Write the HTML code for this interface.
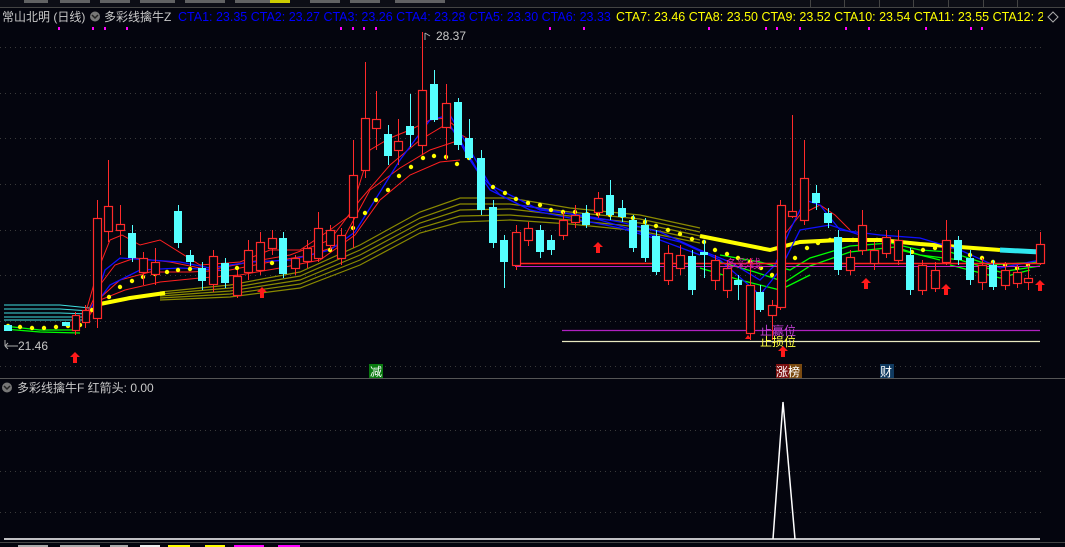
<!DOCTYPE html>
<html><head><meta charset="utf-8"><style>
body{margin:0;background:#04050e;width:1065px;height:547px;overflow:hidden;font-family:"Liberation Sans","Noto Sans CJK SC",sans-serif}
svg{position:absolute;left:0;top:0}
.t{font-family:"Liberation Sans","Noto Sans CJK SC",sans-serif;font-size:12px}
.h{font-family:"Liberation Sans","Noto Sans CJK SC",sans-serif;font-size:12.5px}
</style></head><body>
<svg width="1065" height="547" viewBox="0 0 1065 547">
<rect width="1065" height="547" fill="#04050e"/>
<rect x="0" y="0" width="1065" height="7" fill="#0d0e16"/>
<g fill="#777" opacity=".8"><rect x="24" y="0" width="24" height="3"/><rect x="60" y="0" width="30" height="3"/><rect x="100" y="0" width="30" height="3"/><rect x="140" y="0" width="35" height="3"/><rect x="185" y="0" width="40" height="3"/><rect x="235" y="0" width="40" height="3"/><rect x="310" y="0" width="30" height="3"/><rect x="350" y="0" width="30" height="3"/><rect x="395" y="0" width="50" height="3"/></g>
<rect x="270" y="0" width="20" height="3" fill="#cc0"/>
<g stroke="#444" stroke-width="1"><line x1="0" y1="7.5" x2="1065" y2="7.5"/><line x1="810.5" y1="0" x2="810.5" y2="7"/><line x1="844.5" y1="0" x2="844.5" y2="7"/><line x1="879.5" y1="0" x2="879.5" y2="7"/><line x1="913.5" y1="0" x2="913.5" y2="7"/><line x1="948.5" y1="0" x2="948.5" y2="7"/><line x1="983.5" y1="0" x2="983.5" y2="7"/><line x1="1017.5" y1="0" x2="1017.5" y2="7"/></g>
<text x="2" y="21" class="t" fill="#c8c8c8">常山北明 (日线)</text>
<circle cx="95" cy="16.5" r="5" fill="#777"/><path d="M92 15l3 3 3-3" stroke="#222" stroke-width="1.5" fill="none"/>
<text x="104" y="21" class="t" fill="#c8c8c8">多彩线擒牛Z</text>
<text x="178" y="21" class="h" fill="#0000ff">CTA1: 23.35  CTA2: 23.27  CTA3: 23.26  CTA4: 23.28  CTA5: 23.30  CTA6: 23.33</text>
<text x="616" y="21" class="h" fill="#ffff00">CTA7: 23.46  CTA8: 23.50  CTA9: 23.52  CTA10: 23.54  CTA11: 23.55  CTA12: 2</text>
<rect x="1043" y="8" width="22" height="18" fill="#04050e"/>
<path d="M1053 12l5 5-5 5-5-5z" stroke="#aaa" fill="none"/>
<g fill="#f0f"><rect x="58" y="27" width="2" height="3"/><rect x="92" y="27" width="2" height="3"/><rect x="104" y="27" width="2" height="3"/><rect x="126" y="27" width="2" height="3"/><rect x="340" y="27" width="2" height="3"/><rect x="352" y="27" width="2" height="3"/><rect x="363" y="27" width="2" height="3"/><rect x="375" y="27" width="2" height="3"/><rect x="549" y="27" width="2" height="3"/><rect x="583" y="27" width="2" height="3"/><rect x="708" y="27" width="2" height="3"/><rect x="765" y="27" width="2" height="3"/><rect x="776" y="27" width="2" height="3"/><rect x="799" y="27" width="2" height="3"/><rect x="845" y="27" width="2" height="3"/><rect x="868" y="27" width="2" height="3"/><rect x="925" y="27" width="2" height="3"/><rect x="970" y="27" width="2" height="3"/><rect x="981" y="27" width="2" height="3"/></g>
<g stroke="#3a3a3a" stroke-dasharray="1 4"><line x1="0" y1="47.5" x2="1045" y2="47.5"/><line x1="0" y1="93.5" x2="1045" y2="93.5"/><line x1="0" y1="138.5" x2="1045" y2="138.5"/><line x1="0" y1="184.5" x2="1045" y2="184.5"/><line x1="0" y1="230.5" x2="1045" y2="230.5"/><line x1="0" y1="275.5" x2="1045" y2="275.5"/><line x1="0" y1="321.5" x2="1045" y2="321.5"/><line x1="0" y1="366.5" x2="1045" y2="366.5"/><line x1="0" y1="430.5" x2="1045" y2="430.5"/><line x1="0" y1="471.5" x2="1045" y2="471.5"/><line x1="0" y1="512.5" x2="1045" y2="512.5"/></g>
<g stroke="#40e0e0" stroke-width="1" fill="none"><path d="M4 305H60L90 308"/><path d="M4 309H60L90 311"/><path d="M4 313H60L90 314"/><path d="M4 317H60L90 317"/><path d="M4 320H60L90 320"/></g>
<g stroke="#8a8a00" stroke-width="1.2" fill="none">
<path d="M160 292L230 285L300 272L360 245L420 212L460 198L510 198L570 208L640 215L700 228"/>
<path d="M160 294L230 288L300 276L360 250L420 218L460 204L510 204L570 212L640 219L700 232"/>
<path d="M160 296L230 291L300 280L360 255L420 223L460 210L510 209L570 216L640 223L700 236"/>
<path d="M160 298L230 294L300 284L360 260L420 228L460 216L510 215L570 220L640 227L700 240"/>
<path d="M160 300L230 297L300 288L360 265L420 233L460 222L510 220L570 224L640 231L700 243"/>
</g>
<g stroke="#ffff00" stroke-width="4" fill="none"><path d="M100 304L130 298L165 293"/><path d="M700 236L740 244L770 250L800 242L840 240L880 240L920 244L960 247L1000 250"/></g>
<path d="M1000 250L1040 252" stroke="#30e8f0" stroke-width="5"/>
<g stroke="#00ff00" stroke-width="1.3" fill="none"><path d="M4 326L40 330L80 330"/><path d="M4 329L40 332L80 333"/><path d="M720 255L760 262L790 270L810 258L850 246L890 243L920 250L950 252L990 265L1040 262"/><path d="M720 262L755 272L785 282L810 266L850 252L895 247L920 255L960 260L1000 272L1040 266"/><path d="M700 268L740 280L780 290L810 275"/><path d="M900 250L940 260M950 265L1000 278L1030 270"/></g>
<g stroke="#ff2020" stroke-width="1" fill="none">
<path d="M85 315L98 270L110 240L122 235L140 245L160 240L200 265L240 262L270 250L300 250L330 230L350 215L370 150L390 138L410 130L430 120L445 118L460 130"/>
<path d="M85 318L100 285L115 265L135 258L170 262L210 270L250 262L290 255L330 240L360 200L390 165L420 140L445 125L470 140"/>
<path d="M85 320L100 298L120 280L150 272L190 272L230 270L270 262L310 255L340 245L370 190L400 168L430 150L460 140"/>
<path d="M85 322L100 300L125 290L160 282L200 278L240 275L280 268L320 260L355 235L380 200L410 175L440 162L460 160"/>
<path d="M780 240L800 215L820 205L835 215L850 230"/>
</g>
<g stroke="#1010ff" stroke-width="1.3" fill="none">
<path d="M85 320L95 300L105 270L120 258L150 260L180 262L210 268L250 262L290 260L330 250L355 232L375 200L400 160L430 120L450 115L470 150L490 185L510 195L540 210L580 215L620 222L660 232L700 250L730 262L760 280L775 265L790 230L805 200L820 205L840 230L880 235L920 238L960 250L1000 268L1040 260"/>
<path d="M450 125L470 160L490 190L520 205L560 212L600 220L640 232L680 242L720 260L760 295L780 270L800 230L830 225L860 235"/>
<path d="M460 140L480 175L500 195L530 210L570 218L620 228L660 240L700 255"/>
<path d="M95 305L110 285L140 270L180 268L220 270"/>
</g>
<g fill="#ffff00">
<circle cx="8" cy="326" r="2.2"/><circle cx="20" cy="327" r="2.2"/><circle cx="32" cy="328" r="2.2"/><circle cx="44" cy="328" r="2.2"/><circle cx="56" cy="327" r="2.2"/><circle cx="68" cy="326" r="2.2"/><circle cx="80" cy="325" r="2.2"/><circle cx="92" cy="310" r="2.2"/><circle cx="97" cy="311" r="2.2"/><circle cx="109" cy="297" r="2.2"/><circle cx="120" cy="287" r="2.2"/><circle cx="132" cy="281" r="2.2"/><circle cx="143" cy="277" r="2.2"/><circle cx="155" cy="274" r="2.2"/><circle cx="167" cy="272" r="2.2"/><circle cx="178" cy="270" r="2.2"/><circle cx="190" cy="269" r="2.2"/><circle cx="202" cy="270" r="2.2"/><circle cx="213" cy="269" r="2.2"/><circle cx="225" cy="270" r="2.2"/><circle cx="237" cy="268" r="2.2"/><circle cx="248" cy="266" r="2.2"/><circle cx="260" cy="264" r="2.2"/><circle cx="272" cy="263" r="2.2"/><circle cx="283" cy="262" r="2.2"/><circle cx="295" cy="261" r="2.2"/><circle cx="307" cy="258" r="2.2"/><circle cx="318" cy="255" r="2.2"/><circle cx="330" cy="250" r="2.2"/><circle cx="341" cy="244" r="2.2"/><circle cx="353" cy="228" r="2.2"/><circle cx="365" cy="213" r="2.2"/><circle cx="376" cy="200" r="2.2"/><circle cx="388" cy="190" r="2.2"/><circle cx="399" cy="176" r="2.2"/><circle cx="411" cy="167" r="2.2"/><circle cx="423" cy="158" r="2.2"/><circle cx="434" cy="156" r="2.2"/><circle cx="446" cy="157" r="2.2"/><circle cx="457" cy="164" r="2.2"/><circle cx="469" cy="158" r="2.2"/><circle cx="481" cy="175" r="2.2"/><circle cx="493" cy="187" r="2.2"/><circle cx="505" cy="193" r="2.2"/><circle cx="516" cy="199" r="2.2"/><circle cx="528" cy="203" r="2.2"/><circle cx="540" cy="205" r="2.2"/><circle cx="551" cy="210" r="2.2"/><circle cx="563" cy="212" r="2.2"/><circle cx="575" cy="212" r="2.2"/><circle cx="587" cy="214" r="2.2"/><circle cx="598" cy="214" r="2.2"/><circle cx="610" cy="215" r="2.2"/><circle cx="622" cy="216" r="2.2"/><circle cx="633" cy="218" r="2.2"/><circle cx="645" cy="222" r="2.2"/><circle cx="656" cy="226" r="2.2"/><circle cx="668" cy="230" r="2.2"/><circle cx="680" cy="234" r="2.2"/><circle cx="692" cy="239" r="2.2"/><circle cx="704" cy="242" r="2.2"/><circle cx="715" cy="250" r="2.2"/><circle cx="727" cy="254" r="2.2"/><circle cx="738" cy="258" r="2.2"/><circle cx="750" cy="262" r="2.2"/><circle cx="761" cy="268" r="2.2"/><circle cx="772" cy="275" r="2.2"/><circle cx="783" cy="265" r="2.2"/><circle cx="795" cy="258" r="2.2"/><circle cx="807" cy="248" r="2.2"/><circle cx="818" cy="243" r="2.2"/><circle cx="830" cy="240" r="2.2"/><circle cx="842" cy="240" r="2.2"/><circle cx="853" cy="240" r="2.2"/><circle cx="865" cy="240" r="2.2"/><circle cx="877" cy="240" r="2.2"/><circle cx="888" cy="240" r="2.2"/><circle cx="900" cy="250" r="2.2"/><circle cx="912" cy="252" r="2.2"/><circle cx="923" cy="250" r="2.2"/><circle cx="935" cy="248" r="2.2"/><circle cx="946" cy="248" r="2.2"/><circle cx="958" cy="252" r="2.2"/><circle cx="970" cy="255" r="2.2"/><circle cx="982" cy="258" r="2.2"/><circle cx="993" cy="262" r="2.2"/><circle cx="1005" cy="265" r="2.2"/><circle cx="1017" cy="268" r="2.2"/><circle cx="1028" cy="265" r="2.2"/><circle cx="1040" cy="262" r="2.2"/>
</g>
<line x1="515" y1="263.5" x2="1040" y2="263.5" stroke="#ff2020" stroke-width="1.5"/>
<line x1="515" y1="266.5" x2="1040" y2="266.5" stroke="#c020c0" stroke-width="1"/>
<line x1="562" y1="330.5" x2="1040" y2="330.5" stroke="#b020c0" stroke-width="1.3"/>
<line x1="562" y1="341.5" x2="1040" y2="341.5" stroke="#e8e8c0" stroke-width="1.3"/>
<g stroke="#ff2a2a" stroke-width="1" fill="none">
<path d="M75.5 312V335M85.5 305V328M97.5 200V328M108.5 160V242M120.5 205V255M143.5 252V285M155.5 248V285M213.5 250V292M237.5 270V298M248.5 240V280M260.5 232V275M272.5 230V255M295.5 255V275M307.5 240V268M318.5 212V262M330.5 225V250M341.5 228V265M353.5 140V248M365.5 62V178M376.5 91V150M398.5 119V165M422.5 32V155M446.5 84V160M516.5 225V270M528.5 222V246M563.5 212V240M575.5 205V228M598.5 192V218M668.5 245V285M680.5 245V275M715.5 255V290M727.5 260V298M750.5 258V340M772.5 300V340M780.5 200V310M792.5 115V218M804.5 140V225M850.5 250V275M862.5 210V255M874.5 242V270M886.5 230V258M898.5 230V265M922.5 260V295M935.5 262V292M946.5 220V265M982.5 258V290M1005.5 262V290M1017.5 265V288M1028.5 265V290M1040.5 232V265"/>
</g>
<g stroke="#ff2a2a" stroke-width="1.2" fill="#04050e">
<rect x="72.5" y="315.5" width="7" height="15"/><rect x="82.5" y="310.5" width="7" height="12"/><rect x="93.5" y="218.5" width="8" height="100"/><rect x="104.5" y="206.5" width="8" height="25"/><rect x="116.5" y="224.5" width="8" height="6"/><rect x="139.5" y="258.5" width="8" height="14"/><rect x="151.5" y="262.5" width="8" height="12"/><rect x="209.5" y="256.5" width="8" height="28"/><rect x="233.5" y="276.5" width="8" height="19"/><rect x="244.5" y="250.5" width="8" height="22"/><rect x="256.5" y="242.5" width="8" height="28"/><rect x="268.5" y="238.5" width="8" height="10"/><rect x="291.5" y="258.5" width="8" height="10"/><rect x="303.5" y="248.5" width="8" height="13"/><rect x="314.5" y="228.5" width="8" height="30"/><rect x="326.5" y="230.5" width="8" height="15"/><rect x="337.5" y="235.5" width="8" height="23"/><rect x="349.5" y="175.5" width="8" height="42"/><rect x="361.5" y="118.5" width="8" height="52"/><rect x="372.5" y="119.5" width="8" height="9"/><rect x="394.5" y="141.5" width="8" height="9"/><rect x="418.5" y="90.5" width="8" height="55"/><rect x="442.5" y="103.5" width="8" height="24"/><rect x="512.5" y="232.5" width="8" height="33"/><rect x="524.5" y="228.5" width="8" height="12"/><rect x="559.5" y="220.5" width="8" height="15"/><rect x="571.5" y="215.5" width="8" height="7"/><rect x="594.5" y="198.5" width="8" height="14"/><rect x="664.5" y="253.5" width="8" height="27"/><rect x="676.5" y="255.5" width="8" height="13"/><rect x="711.5" y="260.5" width="8" height="20"/><rect x="723.5" y="268.5" width="8" height="22"/><rect x="746.5" y="285.5" width="8" height="48"/><rect x="768.5" y="305.5" width="8" height="10"/><rect x="777.5" y="205.5" width="8" height="102"/><rect x="788.5" y="211.5" width="8" height="5"/><rect x="800.5" y="178.5" width="8" height="42"/><rect x="846.5" y="257.5" width="8" height="13"/><rect x="858.5" y="225.5" width="8" height="25"/><rect x="870.5" y="250.5" width="8" height="13"/><rect x="882.5" y="237.5" width="8" height="16"/><rect x="894.5" y="240.5" width="8" height="20"/><rect x="918.5" y="265.5" width="8" height="25"/><rect x="931.5" y="270.5" width="8" height="18"/><rect x="942.5" y="240.5" width="8" height="22"/><rect x="978.5" y="265.5" width="8" height="17"/><rect x="1001.5" y="270.5" width="8" height="15"/><rect x="1013.5" y="272.5" width="8" height="11"/><rect x="1024.5" y="278.5" width="8" height="4"/><rect x="1036.5" y="244.5" width="8" height="19"/>
</g>
<g stroke="#55ffff" stroke-width="1"><path d="M132.5 225V262M178.5 205V248M190.5 250V266M202.5 262V290M225.5 258V288M283.5 232V278M388.5 125V165M410.5 94V147M434.5 70V122M458.5 98V150M469.5 119V160M481.5 150V215M493.5 200V248M504.5 235V288M540.5 225V258M551.5 235V255M586.5 205V228M610.5 180V220M622.5 200V222M633.5 215V252M645.5 218V262M656.5 230V275M692.5 250V295M704.5 240V278M738.5 275V300M760.5 285V312M816.5 185V210M828.5 208V228M838.5 230V275M910.5 248V295M958.5 236V265M970.5 250V285M993.5 260V290"/></g>
<g fill="#55ffff">
<rect x="4" y="325" width="8" height="6"/><rect x="62" y="322" width="8" height="4"/><rect x="128" y="233" width="8" height="25"/><rect x="174" y="211" width="8" height="32"/><rect x="186" y="255" width="8" height="7"/><rect x="198" y="268" width="8" height="13"/><rect x="221" y="263" width="8" height="20"/><rect x="279" y="238" width="8" height="36"/><rect x="384" y="134" width="8" height="22"/><rect x="406" y="126" width="8" height="9"/><rect x="430" y="84" width="8" height="36"/><rect x="454" y="102" width="8" height="43"/><rect x="465" y="138" width="8" height="20"/><rect x="477" y="158" width="8" height="52"/><rect x="489" y="207" width="8" height="36"/><rect x="500" y="240" width="8" height="22"/><rect x="536" y="230" width="8" height="22"/><rect x="547" y="240" width="8" height="10"/><rect x="582" y="213" width="8" height="12"/><rect x="606" y="195" width="8" height="20"/><rect x="618" y="208" width="8" height="9"/><rect x="629" y="220" width="8" height="28"/><rect x="641" y="225" width="8" height="33"/><rect x="652" y="236" width="8" height="36"/><rect x="688" y="256" width="8" height="34"/><rect x="700" y="252" width="8" height="3"/><rect x="734" y="280" width="8" height="5"/><rect x="756" y="292" width="8" height="18"/><rect x="812" y="193" width="8" height="10"/><rect x="824" y="213" width="8" height="10"/><rect x="834" y="237" width="8" height="33"/><rect x="906" y="255" width="8" height="35"/><rect x="954" y="240" width="8" height="20"/><rect x="966" y="258" width="8" height="22"/><rect x="989" y="265" width="8" height="22"/>
</g>
<text x="725" y="268" class="t" fill="#d020a0" font-size="13">多彩线</text>
<text x="760" y="335" class="t" fill="#c040d0">止赢位</text>
<text x="760" y="346" class="t" fill="#ffff40">止损位</text>
<path d="M425 33V40M425 33l5 3" stroke="#aaa" fill="none"/>
<text x="436" y="40" class="t" fill="#c8c8c8">28.37</text>
<path d="M5 346H18M5 346l3-3M5 346l3 3M5 340V346" stroke="#aaa" fill="none"/>
<text x="18" y="350" class="t" fill="#c8c8c8">21.46</text>
<g fill="#ff1a1a">
<path d="M75 352l-5 5h3v6h4v-6h3z"/><path d="M262 287l-5 5h3v6h4v-6h3z"/><path d="M598 242l-5 5h3v6h4v-6h3z"/><path d="M783 346l-5 5h3v6h4v-6h3z"/><path d="M866 278l-5 5h3v6h4v-6h3z"/><path d="M946 284l-5 5h3v6h4v-6h3z"/><path d="M1040 280l-5 5h3v6h4v-6h3z"/><path d="M748 335l-3 4h6z"/>
</g>
<rect x="369" y="364" width="14" height="14" fill="#0a7a10"/><text x="370" y="376" class="t" fill="#fff">减</text>
<rect x="776" y="364" width="13" height="14" fill="#7a1010"/><rect x="789" y="364" width="13" height="14" fill="#7a4a10"/><text x="776" y="376" class="t" fill="#fff">涨榜</text>
<rect x="880" y="364" width="14" height="14" fill="#103a60"/><text x="880" y="376" class="t" fill="#fff">财</text>
<line x1="0" y1="378.5" x2="1065" y2="378.5" stroke="#555"/>
<circle cx="7" cy="387.5" r="5" fill="#777"/><path d="M4 386l3 3 3-3" stroke="#222" stroke-width="1.5" fill="none"/>
<text x="17" y="392" class="t" fill="#c8c8c8">多彩线擒牛F  红箭头: 0.00</text>
<path d="M773 539L783 402L795 539" stroke="#fff" stroke-width="1.5" fill="none"/>
<line x1="4" y1="539" x2="1040" y2="539" stroke="#fff" stroke-width="1.5"/>
<line x1="0" y1="542.5" x2="1065" y2="542.5" stroke="#444"/>
<g fill="#aaa"><rect x="18" y="545" width="30" height="2"/><rect x="60" y="545" width="40" height="2"/><rect x="110" y="545" width="18" height="2"/></g>
<rect x="140" y="545" width="20" height="2" fill="#eee"/><rect x="168" y="545" width="22" height="2" fill="#ff0"/><rect x="205" y="545" width="20" height="2" fill="#ff0"/><rect x="234" y="545" width="30" height="2" fill="#f0f"/><rect x="278" y="545" width="22" height="2" fill="#f0f"/>
</svg>
</body></html>
